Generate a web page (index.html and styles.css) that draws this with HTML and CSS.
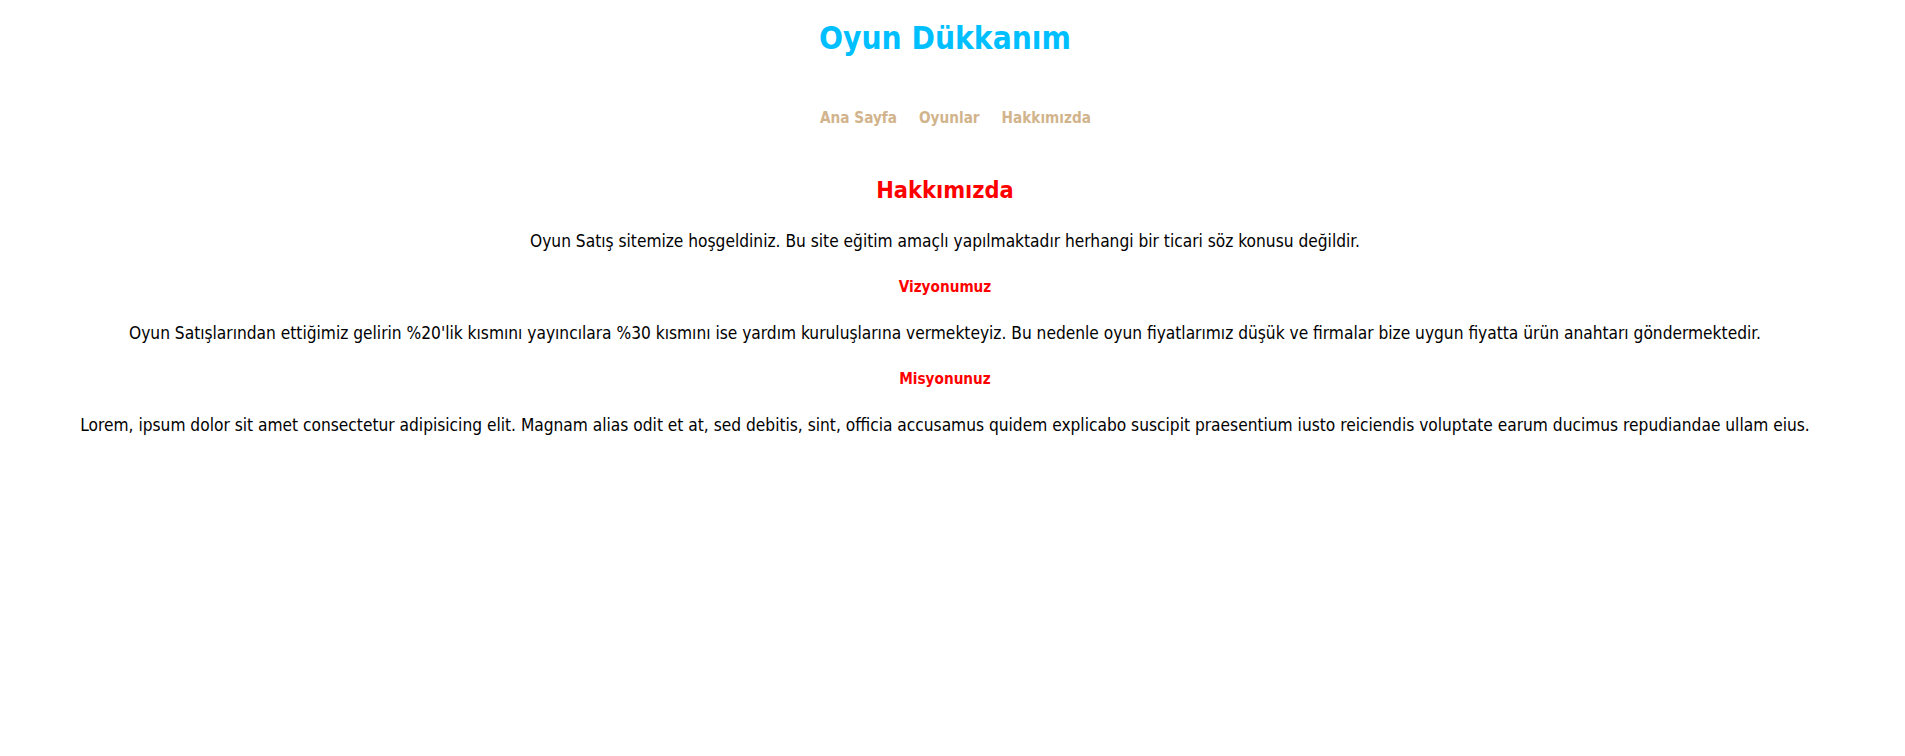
FILE: index.html
```html
<!DOCTYPE html>
<html lang="tr">
<head>
<meta charset="utf-8">
<title>Oyun Dükkanım</title>
<link rel="stylesheet" href="styles.css">
</head>
<body>
<header class="site-header">
  <h1 class="site-title">Oyun Dükkanım</h1>
  <nav class="site-nav">
    <a href="#" class="nav-link">Ana Sayfa</a>
    <a href="#" class="nav-link">Oyunlar</a>
    <a href="#" class="nav-link">Hakkımızda</a>
  </nav>
</header>
<main class="content">
  <h2 class="page-title">Hakkımızda</h2>
  <p class="text">Oyun Satış sitemize hoşgeldiniz. Bu site eğitim amaçlı yapılmaktadır herhangi bir ticari söz konusu değildir.</p>
  <h4 class="sub-title">Vizyonumuz</h4>
  <p class="text">Oyun Satışlarından ettiğimiz gelirin %20'lik kısmını yayıncılara %30 kısmını ise yardım kuruluşlarına vermekteyiz. Bu nedenle oyun fiyatlarımız düşük ve firmalar bize uygun fiyatta ürün anahtarı göndermektedir.</p>
  <h4 class="sub-title">Misyonunuz</h4>
  <p class="text">Lorem, ipsum dolor sit amet consectetur adipisicing elit. Magnam alias odit et at, sed debitis, sint, officia accusamus quidem explicabo suscipit praesentium iusto reiciendis voluptate earum ducimus repudiandae ullam eius.</p>
</main>
</body>
</html>
```
FILE: styles.css
```css
html, body {
  margin: 0;
  padding: 0;
  background: #ffffff;
}
body {
  font-family: "DejaVu Sans Condensed", "DejaVu Sans", sans-serif;
  color: #000000;
  text-align: center;
  padding-right: 15px;
}
.site-header {
  display: flex;
  flex-direction: column;
  align-items: center;
  padding-top: 20px;
  gap: 52px;
}
.site-title {
  margin: 0;
  font-size: 31.4px;
  line-height: 36px;
  font-weight: bold;
  color: #00bfff;
}
.site-nav {
  display: flex;
  justify-content: center;
  gap: 22px;
  padding-left: 21px;
}
.nav-link {
  font-size: 15.2px;
  line-height: 20px;
  font-weight: bold;
  color: #d2b48c;
  text-decoration: none;
}
.content {
  display: flex;
  flex-direction: column;
  align-items: center;
  gap: 25px;
  padding-top: 47px;
}
.page-title {
  margin: 0;
  font-size: 23.4px;
  line-height: 30px;
  font-weight: bold;
  color: #ff0000;
}
.sub-title {
  margin: 0;
  font-size: 15.2px;
  line-height: 20px;
  font-weight: bold;
  color: #ff0000;
}
.text {
  margin: 0;
  font-size: 17.2px;
  line-height: 22px;
  white-space: nowrap;
}
```
